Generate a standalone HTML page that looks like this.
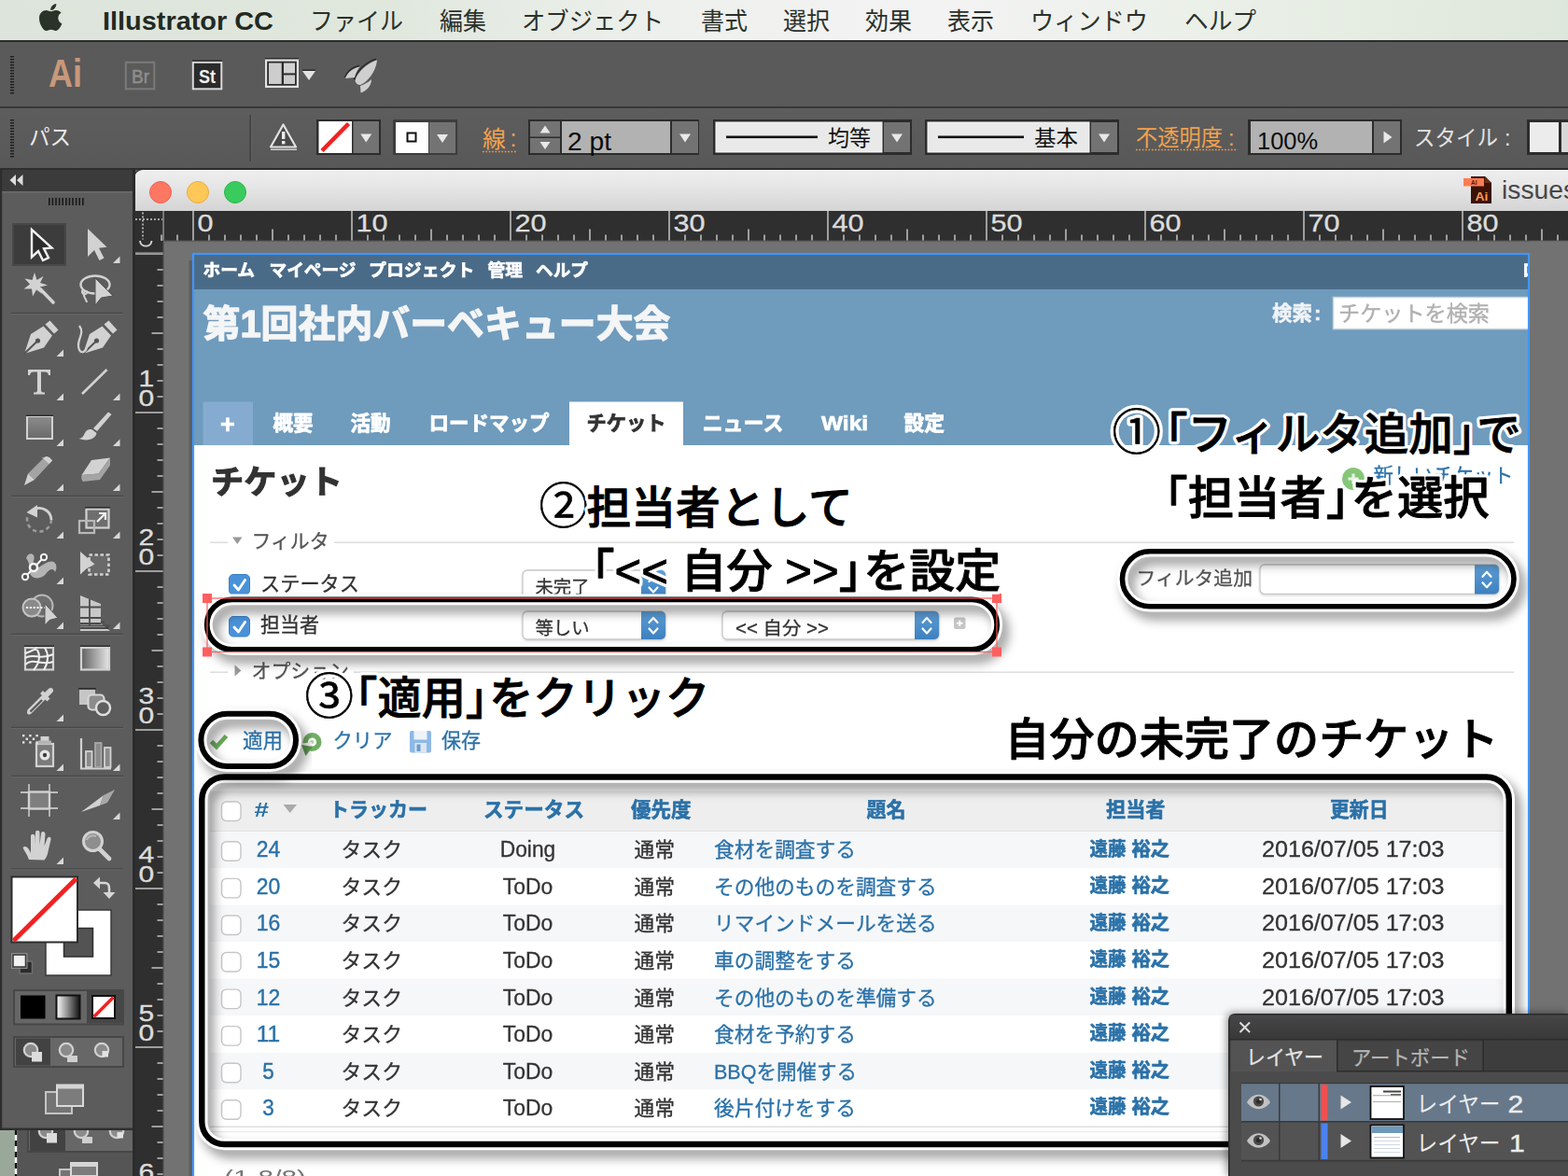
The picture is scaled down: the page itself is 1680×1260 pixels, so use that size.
<!DOCTYPE html>
<html lang="ja"><head><meta charset="utf-8"><title>Illustrator CC - issues</title><style>html,body{margin:0;padding:0;background:#5a5a5a}body{width:1680px;height:1260px;position:relative;overflow:hidden;font-family:"Liberation Sans", "Noto Sans CJK JP", sans-serif}body>div,body>div div{position:absolute;overflow:hidden}svg{display:block;position:absolute;left:0;top:0;overflow:hidden}text{font-family:"Liberation Sans", "Noto Sans CJK JP", sans-serif;white-space:pre}</style></head>
<body>
<div id="menubar" style="left:0px;top:0px;width:1680px;height:45px;background:linear-gradient(90deg,#dce4db 0,#e0e8de 25%,#eff1ee 45%,#f3f3f3 60%,#e9efe6 80%,#dee7db 100%);border-bottom:2px solid #2c2c2c;box-sizing:border-box;"><svg width="1680" height="45" viewBox="0 0 1680 45"><path transform="translate(41.74,1.93) scale(0.06473)" d="M318.7 268.7c-.2-36.7 16.4-64.4 50-84.8-18.8-26.9-47.2-41.7-84.7-44.6-35.5-2.8-74.3 20.7-88.5 20.7-15 0-49.4-19.7-76.4-19.7C63.3 141.2 4 184.8 4 273.5q0 39.3 14.4 81.2c12.8 36.7 59 126.7 107.2 125.2 25.2-.6 43-17.9 75.8-17.9 31.8 0 48.3 17.9 76.4 17.9 48.6-.7 90.4-82.5 102.6-119.3-65.2-30.7-61.7-90-61.7-91.9zm-56.6-164.2c27.3-32.4 24.8-61.9 24-72.5-24.1 1.4-52 16.4-67.9 34.9-17.5 19.8-27.8 44.3-25.6 71.9 26.1 2 49.9-11.4 69.5-34.3z" fill="#2a3328"/><text x="110" y="32" font-size="28.5" fill="#232a22" font-weight="bold" text-anchor="start" textLength="183" lengthAdjust="spacingAndGlyphs">Illustrator CC</text><text x="332" y="32" font-size="26" fill="#2b302a" textLength="100" lengthAdjust="spacingAndGlyphs">ファイル</text><text x="471" y="32" font-size="26" fill="#2b302a" textLength="50" lengthAdjust="spacingAndGlyphs">編集</text><text x="559" y="32" font-size="26" fill="#2b302a" textLength="152" lengthAdjust="spacingAndGlyphs">オブジェクト</text><text x="751" y="32" font-size="26" fill="#2b302a" textLength="50" lengthAdjust="spacingAndGlyphs">書式</text><text x="839" y="32" font-size="26" fill="#2b302a" textLength="50" lengthAdjust="spacingAndGlyphs">選択</text><text x="927" y="32" font-size="26" fill="#2b302a" textLength="50" lengthAdjust="spacingAndGlyphs">効果</text><text x="1015" y="32" font-size="26" fill="#2b302a" textLength="50" lengthAdjust="spacingAndGlyphs">表示</text><text x="1104" y="32" font-size="26" fill="#2b302a" textLength="126" lengthAdjust="spacingAndGlyphs">ウィンドウ</text><text x="1269" y="32" font-size="26" fill="#2b302a" textLength="77" lengthAdjust="spacingAndGlyphs">ヘルプ</text></svg></div>
<div id="appbar" style="left:0px;top:45px;width:1680px;height:70px;background:#5a5a5a;"><svg width="1680" height="70" viewBox="0 45 1680 70"><rect x="11" y="60" width="4" height="1.4" fill="#1e1e1e"/><rect x="11" y="63" width="4" height="1.4" fill="#1e1e1e"/><rect x="11" y="66" width="4" height="1.4" fill="#1e1e1e"/><rect x="11" y="69" width="4" height="1.4" fill="#1e1e1e"/><rect x="11" y="72" width="4" height="1.4" fill="#1e1e1e"/><rect x="11" y="75" width="4" height="1.4" fill="#1e1e1e"/><rect x="11" y="78" width="4" height="1.4" fill="#1e1e1e"/><rect x="11" y="81" width="4" height="1.4" fill="#1e1e1e"/><rect x="11" y="84" width="4" height="1.4" fill="#1e1e1e"/><rect x="11" y="87" width="4" height="1.4" fill="#1e1e1e"/><rect x="11" y="90" width="4" height="1.4" fill="#1e1e1e"/><rect x="11" y="93" width="4" height="1.4" fill="#1e1e1e"/><rect x="11" y="96" width="4" height="1.4" fill="#1e1e1e"/><rect x="11" y="99" width="4" height="1.4" fill="#1e1e1e"/><text x="52" y="93" font-size="43" fill="#c9987a" font-weight="bold" text-anchor="start" textLength="36" lengthAdjust="spacingAndGlyphs">Ai</text><rect x="134.8" y="66.8" width="30.5" height="28.5" fill="none" stroke="#7b7b7b" stroke-width="2"/><text x="141" y="89" font-size="20" fill="#8e8e8e" font-weight="normal" text-anchor="start" textLength="19" lengthAdjust="spacingAndGlyphs" stroke="#8e8e8e" stroke-width=".500">Br</text><rect x="206.8" y="66.8" width="30.5" height="28.5" fill="#2b2b2b" stroke="#dadada" stroke-width="2"/><rect x="206" y="64.3" width="32" height="1.5" fill="#2e2e2e"/><text x="213" y="89" font-size="20" fill="#f0f0f0" font-weight="bold" text-anchor="start" textLength="18" lengthAdjust="spacingAndGlyphs">St</text><rect x="284" y="62" width="36" height="1.6" fill="#2c2c2c"/><rect x="284" y="63.5" width="36" height="30.5" fill="#e2e2e2"/><rect x="286.2" y="65.7" width="31.6" height="26" fill="#2b2b2b"/><rect x="288" y="67.5" width="13.7" height="22.5" fill="#cdcdcd"/><rect x="304" y="67.5" width="12" height="10.9" fill="#d2d2d2"/><rect x="304" y="80.4" width="12" height="9.6" fill="#cbcbcb"/><rect x="324" y="74.5" width="14" height="1.5" fill="#2c2c2c"/><path d="M324 76h14l-7 10z" fill="#e2e2e2"/><path d="M403 63.200C393 65.800 381 77 379.500 85.500" fill="none" stroke="#2c2c2c" stroke-width="1.600"/><path d="M385 70.200C377.500 71.800 371.500 77 369.500 83" fill="none" stroke="#2c2c2c" stroke-width="1.600"/><g fill="#cfcfcf"><path d="M404 64.500C394 67 382 78 380.500 86.500c.5 2.500 2.500 4.500 5.500 4.500C394 88 403 76 404 64.500z"/><path d="M385.500 71.500C378 73 372 78 370 84l10-1c1-4 3-8 5.500-11.500z"/><path d="M398 85c0 7-5 12-11.500 14.500l-.5-7.500c4-1.500 9-4 12-7z"/></g></svg></div>
<div id="controlbar" style="left:0px;top:114px;width:1680px;height:68px;background:linear-gradient(#5d5d5d,#585858);"><svg width="1680" height="68" viewBox="0 114 1680 68"><rect x="11" y="128" width="4" height="1.4" fill="#1e1e1e"/><rect x="11" y="131" width="4" height="1.4" fill="#1e1e1e"/><rect x="11" y="134" width="4" height="1.4" fill="#1e1e1e"/><rect x="11" y="137" width="4" height="1.4" fill="#1e1e1e"/><rect x="11" y="140" width="4" height="1.4" fill="#1e1e1e"/><rect x="11" y="143" width="4" height="1.4" fill="#1e1e1e"/><rect x="11" y="146" width="4" height="1.4" fill="#1e1e1e"/><rect x="11" y="149" width="4" height="1.4" fill="#1e1e1e"/><rect x="11" y="152" width="4" height="1.4" fill="#1e1e1e"/><rect x="11" y="155" width="4" height="1.4" fill="#1e1e1e"/><rect x="11" y="158" width="4" height="1.4" fill="#1e1e1e"/><rect x="11" y="161" width="4" height="1.4" fill="#1e1e1e"/><rect x="11" y="164" width="4" height="1.4" fill="#1e1e1e"/><rect x="11" y="167" width="4" height="1.4" fill="#1e1e1e"/><text x="31" y="155" font-size="23" fill="#ececec" textLength="45" lengthAdjust="spacingAndGlyphs">パス</text><rect x="267.5" y="123" width="1.5" height="50" fill="#3f3f3f"/><rect x="269" y="123" width="1" height="50" fill="#626262"/><path d="M303.5 133.5L317 157.5H290z" fill="#4a4a4a" stroke="#e2e2e2" stroke-width="2.2" stroke-linejoin="round"/><rect x="302" y="141" width="3.4" height="8" fill="#ececec"/><rect x="302" y="151" width="3.4" height="3.4" fill="#ececec"/><rect x="290" y="159.5" width="28" height="1.5" fill="#cfcfcf"/><rect x="339" y="128" width="69" height="38" fill="#2c2c2c"/><rect x="341.5" y="130" width="35.5" height="34" fill="#fff"/><path d="M345 161.500L373.500 132.500" stroke="#f02222" stroke-width="4.600"/><rect x="378.5" y="130" width="27.5" height="34" fill="#737373"/><path d="M386.25 143.5h12l-6 9z" fill="#e8e8e8"/><rect x="421" y="128" width="69" height="38" fill="#3d3d3d"/><rect x="424" y="131" width="35" height="33" fill="#fff"/><rect x="436.5" y="142.5" width="9" height="9" fill="none" stroke="#111" stroke-width="2"/><rect x="460" y="131" width="28" height="33" fill="#737373"/><path d="M468 144h12l-6 9z" fill="#e8e8e8"/><text x="517" y="158" font-size="25" fill="#f3a24d" textLength="25" lengthAdjust="spacingAndGlyphs">線</text><text x="546.5" y="157" font-size="25" fill="#f3a24d">:</text><path d="M517 162.5H553" stroke="#f3a24d" stroke-width="1.6" stroke-dasharray="1.6 1.8"/><rect x="566" y="128" width="183" height="38" fill="#2c2c2c"/><rect x="568" y="130" width="32" height="16.5" fill="#737373"/><rect x="568" y="148" width="32" height="16" fill="#737373"/><path d="M578.5 142.5h11l-5.5 -8z" fill="#e8e8e8"/><path d="M578.5 152h11l-5.5 8z" fill="#e8e8e8"/><rect x="602" y="130" width="116" height="34" fill="#b2b2b2"/><text x="608" y="160.500" font-size="27" fill="#0a0a0a" textLength="47" lengthAdjust="spacingAndGlyphs">2 pt</text><rect x="720" y="130" width="28" height="34" fill="#737373"/><path d="M728 143.5h12l-6 9z" fill="#e8e8e8"/><rect x="764" y="128" width="213" height="38" fill="#2c2c2c"/><rect x="767" y="131" width="178" height="32" fill="#e9e9e9" stroke="#fafafa" stroke-width="1"/><rect x="778" y="145.5" width="98" height="2.6" fill="#111"/><text x="887" y="156" font-size="23" fill="#111" textLength="46" lengthAdjust="spacingAndGlyphs">均等</text><rect x="947" y="131" width="28" height="32" fill="#737373"/><path d="M955 143.5h12l-6 9z" fill="#e8e8e8"/><rect x="991" y="128" width="208" height="38" fill="#2c2c2c"/><rect x="994" y="131" width="173" height="32" fill="#e9e9e9" stroke="#fafafa" stroke-width="1"/><rect x="1005" y="145.5" width="92" height="2.6" fill="#111"/><text x="1108" y="156" font-size="23" fill="#111" textLength="47" lengthAdjust="spacingAndGlyphs">基本</text><rect x="1169" y="131" width="28" height="32" fill="#737373"/><path d="M1177 143.5h12l-6 9z" fill="#e8e8e8"/><text x="1217" y="156" font-size="23.500" fill="#f3a24d" textLength="93" lengthAdjust="spacingAndGlyphs">不透明度</text><text x="1316" y="156" font-size="23.500" fill="#f3a24d">:</text><path d="M1217 160.5H1326" stroke="#f3a24d" stroke-width="1.6" stroke-dasharray="1.6 1.8"/><rect x="1337" y="128" width="165" height="38" fill="#2c2c2c"/><rect x="1340" y="130" width="130" height="34" fill="#b2b2b2"/><text x="1347" y="160" font-size="26" fill="#0a0a0a" textLength="65" lengthAdjust="spacingAndGlyphs">100%</text><rect x="1472" y="130" width="28" height="34" fill="#737373"/><path d="M1482.5 140.5v13l9 -6.5z" fill="#e8e8e8"/><text x="1515" y="156" font-size="23.500" fill="#e4e4e4" textLength="90" lengthAdjust="spacingAndGlyphs">スタイル</text><text x="1612" y="156" font-size="23.500" fill="#e4e4e4">:</text><rect x="1636" y="128" width="44" height="38" fill="#2c2c2c"/><rect x="1639" y="131" width="31" height="32" fill="#ececec"/><rect x="1673" y="131" width="7" height="32" fill="#d8d8d8"/><rect x="0" y="114" width="1680" height="2" fill="#383838"/><rect x="0" y="180" width="1680" height="2" fill="#2e2e2e"/></svg></div>
<div id="titlebar" style="left:144px;top:182px;width:1536px;height:44px;background:linear-gradient(#efefef 0,#e6e6e6 40%,#d4d4d4 100%);border-radius:9px 0 0 0;box-shadow:0 0 0 1px #2a2a2a;"><svg width="1536" height="44" viewBox="144 182 1536 44"><circle cx="172" cy="206" r="11.500" fill="#fd7763" stroke="#f26050" stroke-width="1"/><circle cx="212" cy="206" r="11.500" fill="#fec858" stroke="#e9ab3c" stroke-width="1"/><circle cx="252" cy="206" r="11.500" fill="#39cb5e" stroke="#2eb34d" stroke-width="1"/><path d="M1576 189h15l7 7v22h-22z" fill="#3a1206"/><path d="M1591 189l7 7h-7z" fill="#6a2c14"/><rect x="1568" y="191" width="22" height="8.5" fill="#ff7c52"/><text x="1580.5" y="214.5" font-size="13" fill="#ff9a52" font-weight="bold" text-anchor="start" textLength="14" lengthAdjust="spacingAndGlyphs">Ai</text><text x="1576" y="198" font-size="6.5" fill="#5a1a08" font-weight="bold" text-anchor="start">AI</text><text x="1609" y="213" font-size="28" fill="#474747" font-weight="normal" text-anchor="start" textLength="80" lengthAdjust="spacingAndGlyphs">issues</text></svg></div>
<div id="document" style="left:145px;top:226px;width:1535px;height:1034px;background:#727272;"><svg width="1535" height="1034" viewBox="145 226 1535 1034"><rect x="145" y="226" width="1535" height="1034" fill="#727272"/><rect x="145" y="226" width="1535" height="32" fill="#2f2f2f"/><rect x="145" y="258" width="30" height="1002" fill="#2f2f2f"/><rect x="174.3" y="226" width="1.6" height="32" fill="#8a8a8a"/><path d="M145 235h29M153 227.500v29" stroke="#adadad" stroke-width="1.900" stroke-dasharray="1.900 2.100"/><path d="M150 258c.5 7.500 12 7.500 12.500 0" fill="none" stroke="#d6d6d6" stroke-width="1.900"/><path d="M207 226v32M377 226v32M547 226v32M717 226v32M887 226v32M1057 226v32M1227 226v32M1397 226v32M1567 226v32M292 245.500v12.500M462 245.500v12.500M632 245.500v12.500M802 245.500v12.500M972 245.500v12.500M1142 245.500v12.500M1312 245.500v12.500M1482 245.500v12.500M1652 245.500v12.500M173 251.500v6.500M190 251.500v6.500M224 251.500v6.500M241 251.500v6.500M258 251.500v6.500M275 251.500v6.500M309 251.500v6.500M326 251.500v6.500M343 251.500v6.500M360 251.500v6.500M394 251.500v6.500M411 251.500v6.500M428 251.500v6.500M445 251.500v6.500M479 251.500v6.500M496 251.500v6.500M513 251.500v6.500M530 251.500v6.500M564 251.500v6.500M581 251.500v6.500M598 251.500v6.500M615 251.500v6.500M649 251.500v6.500M666 251.500v6.500M683 251.500v6.500M700 251.500v6.500M734 251.500v6.500M751 251.500v6.500M768 251.500v6.500M785 251.500v6.500M819 251.500v6.500M836 251.500v6.500M853 251.500v6.500M870 251.500v6.500M904 251.500v6.500M921 251.500v6.500M938 251.500v6.500M955 251.500v6.500M989 251.500v6.500M1006 251.500v6.500M1023 251.500v6.500M1040 251.500v6.500M1074 251.500v6.500M1091 251.500v6.500M1108 251.500v6.500M1125 251.500v6.500M1159 251.500v6.500M1176 251.500v6.500M1193 251.500v6.500M1210 251.500v6.500M1244 251.500v6.500M1261 251.500v6.500M1278 251.500v6.500M1295 251.500v6.500M1329 251.500v6.500M1346 251.500v6.500M1363 251.500v6.500M1380 251.500v6.500M1414 251.500v6.500M1431 251.500v6.500M1448 251.500v6.500M1465 251.500v6.500M1499 251.500v6.500M1516 251.500v6.500M1533 251.500v6.500M1550 251.500v6.500M1584 251.500v6.500M1601 251.500v6.500M1618 251.500v6.500M1635 251.500v6.500M1669 251.500v6.500" stroke="#c4c4c4" stroke-width="1.500"/><text x="211.500" y="247.500" font-size="25.500" fill="#dcdcdc" stroke="#dcdcdc" stroke-width=".35" textLength="17" lengthAdjust="spacingAndGlyphs">0</text><text x="381.500" y="247.500" font-size="25.500" fill="#dcdcdc" stroke="#dcdcdc" stroke-width=".35" textLength="34" lengthAdjust="spacingAndGlyphs">10</text><text x="551.500" y="247.500" font-size="25.500" fill="#dcdcdc" stroke="#dcdcdc" stroke-width=".35" textLength="34" lengthAdjust="spacingAndGlyphs">20</text><text x="721.500" y="247.500" font-size="25.500" fill="#dcdcdc" stroke="#dcdcdc" stroke-width=".35" textLength="34" lengthAdjust="spacingAndGlyphs">30</text><text x="891.500" y="247.500" font-size="25.500" fill="#dcdcdc" stroke="#dcdcdc" stroke-width=".35" textLength="34" lengthAdjust="spacingAndGlyphs">40</text><text x="1061.500" y="247.500" font-size="25.500" fill="#dcdcdc" stroke="#dcdcdc" stroke-width=".35" textLength="34" lengthAdjust="spacingAndGlyphs">50</text><text x="1231.500" y="247.500" font-size="25.500" fill="#dcdcdc" stroke="#dcdcdc" stroke-width=".35" textLength="34" lengthAdjust="spacingAndGlyphs">60</text><text x="1401.500" y="247.500" font-size="25.500" fill="#dcdcdc" stroke="#dcdcdc" stroke-width=".35" textLength="34" lengthAdjust="spacingAndGlyphs">70</text><text x="1571.500" y="247.500" font-size="25.500" fill="#dcdcdc" stroke="#dcdcdc" stroke-width=".35" textLength="34" lengthAdjust="spacingAndGlyphs">80</text><path d="M145 272h30M168.500 289h6.500M168.500 306h6.500M168.500 323h6.500M168.500 340h6.500M162.500 357h12.500M168.500 374h6.500M168.500 391h6.500M168.500 408h6.500M168.500 425h6.500M145 442h30M168.500 459h6.500M168.500 476h6.500M168.500 493h6.500M168.500 510h6.500M162.500 527h12.500M168.500 544h6.500M168.500 561h6.500M168.500 578h6.500M168.500 595h6.500M145 612h30M168.500 629h6.500M168.500 646h6.500M168.500 663h6.500M168.500 680h6.500M162.500 697h12.500M168.500 714h6.500M168.500 731h6.500M168.500 748h6.500M168.500 765h6.500M145 782h30M168.500 799h6.500M168.500 816h6.500M168.500 833h6.500M168.500 850h6.500M162.500 867h12.500M168.500 884h6.500M168.500 901h6.500M168.500 918h6.500M168.500 935h6.500M145 952h30M168.500 969h6.500M168.500 986h6.500M168.500 1003h6.500M168.500 1020h6.500M162.500 1037h12.500M168.500 1054h6.500M168.500 1071h6.500M168.500 1088h6.500M168.500 1105h6.500M145 1122h30M168.500 1139h6.500M168.500 1156h6.500M168.500 1173h6.500M168.500 1190h6.500M162.500 1207h12.500M168.500 1224h6.500M168.500 1241h6.500M168.500 1258h6.500" stroke="#c4c4c4" stroke-width="1.500"/><path d="M145 271h30" stroke="#8a8a8a" stroke-width="1.500"/><text x="148.500" y="414" font-size="24" fill="#dcdcdc" stroke="#dcdcdc" stroke-width=".35" textLength="16.7" lengthAdjust="spacingAndGlyphs">1</text><text x="148.500" y="434.500" font-size="24" fill="#dcdcdc" stroke="#dcdcdc" stroke-width=".35" textLength="16.7" lengthAdjust="spacingAndGlyphs">0</text><text x="148.500" y="584" font-size="24" fill="#dcdcdc" stroke="#dcdcdc" stroke-width=".35" textLength="16.7" lengthAdjust="spacingAndGlyphs">2</text><text x="148.500" y="604.500" font-size="24" fill="#dcdcdc" stroke="#dcdcdc" stroke-width=".35" textLength="16.7" lengthAdjust="spacingAndGlyphs">0</text><text x="148.500" y="754" font-size="24" fill="#dcdcdc" stroke="#dcdcdc" stroke-width=".35" textLength="16.7" lengthAdjust="spacingAndGlyphs">3</text><text x="148.500" y="774.500" font-size="24" fill="#dcdcdc" stroke="#dcdcdc" stroke-width=".35" textLength="16.7" lengthAdjust="spacingAndGlyphs">0</text><text x="148.500" y="924" font-size="24" fill="#dcdcdc" stroke="#dcdcdc" stroke-width=".35" textLength="16.7" lengthAdjust="spacingAndGlyphs">4</text><text x="148.500" y="944.500" font-size="24" fill="#dcdcdc" stroke="#dcdcdc" stroke-width=".35" textLength="16.7" lengthAdjust="spacingAndGlyphs">0</text><text x="148.500" y="1094" font-size="24" fill="#dcdcdc" stroke="#dcdcdc" stroke-width=".35" textLength="16.7" lengthAdjust="spacingAndGlyphs">5</text><text x="148.500" y="1114.500" font-size="24" fill="#dcdcdc" stroke="#dcdcdc" stroke-width=".35" textLength="16.7" lengthAdjust="spacingAndGlyphs">0</text><text x="148.500" y="1264" font-size="24" fill="#dcdcdc" stroke="#dcdcdc" stroke-width=".35" textLength="16.7" lengthAdjust="spacingAndGlyphs">6</text><text x="148.500" y="1284.500" font-size="24" fill="#dcdcdc" stroke="#dcdcdc" stroke-width=".35" textLength="16.7" lengthAdjust="spacingAndGlyphs">0</text><rect x="174.5" y="258" width="1.2" height="1002" fill="#555"/><rect x="175" y="257.5" width="1505" height="1.2" fill="#555"/><rect x="202.5" y="279" width="3.5" height="981" fill="#5e5e5e"/><g id="artboard"><defs><linearGradient id="selblue" x1="0" y1="0" x2="0" y2="1"><stop offset="0" stop-color="#5e9fd8"/><stop offset="1" stop-color="#3d80bf"/></linearGradient><filter id="sel" x="-5%" y="-20%" width="110%" height="150%"><feDropShadow dx="0" dy="1" stdDeviation=".8" flood-color="#000" flood-opacity=".18"/></filter><filter id="soft" x="-5%" y="-5%" width="110%" height="110%"><feGaussianBlur stdDeviation=".55"/></filter></defs><rect x="207" y="272" width="1431" height="988" fill="#fff"/><rect x="207" y="272" width="1431" height="38" fill="#4a6b88"/><rect x="207" y="310" width="1431" height="167" fill="#6f9bbd"/><rect x="1428.5" y="318.5" width="215" height="34" fill="#fff" stroke="#c9d3dc" stroke-width="1.500"/><rect x="217.5" y="430.5" width="53.5" height="46.5" fill="#86abd0"/><rect x="610" y="430.5" width="122" height="47" fill="#fff"/><rect x="225" y="580.5" width="1397" height="1.5" fill="#dcdcdc"/><rect x="244" y="570" width="114" height="22" fill="#fff"/><path d="M249 575.500h10.500l-5.250 7.500z" fill="#9a9a9a"/><rect x="245.5" y="615.5" width="22" height="21.5" fill="#4a92d8" rx="4.500" stroke="#3b80c6" stroke-width="1"/><path d="M251 627l4.500 5 7-10.500" fill="none" stroke="#fff" stroke-width="2.800" stroke-linecap="round" stroke-linejoin="round"/><rect x="560" y="611" width="153" height="30" fill="#fff" rx="5" stroke="#c8c8c8" stroke-width="1.300" filter="url(#sel)"/><path d="M687 611h21a5 5 0 0 1 5 5v20a5 5 0 0 1-5 5h-21z" fill="url(#selblue)"/><path d="M695.5 623l4.500-5 4.500 5M695.5 629.5l4.500 5 4.500-5" fill="none" stroke="#fff" stroke-width="2.200" stroke-linecap="round" stroke-linejoin="round"/><rect x="245.5" y="660.5" width="22" height="21.5" fill="#4a92d8" rx="4.500" stroke="#3b80c6" stroke-width="1"/><path d="M251 672l4.500 5 7-10.500" fill="none" stroke="#fff" stroke-width="2.800" stroke-linecap="round" stroke-linejoin="round"/><rect x="560" y="655" width="153" height="30" fill="#fff" rx="5" stroke="#c8c8c8" stroke-width="1.300" filter="url(#sel)"/><path d="M687 655h21a5 5 0 0 1 5 5v20a5 5 0 0 1-5 5h-21z" fill="url(#selblue)"/><path d="M695.5 667l4.500-5 4.500 5M695.5 673.5l4.500 5 4.500-5" fill="none" stroke="#fff" stroke-width="2.200" stroke-linecap="round" stroke-linejoin="round"/><rect x="774" y="655" width="232" height="30" fill="#fff" rx="5" stroke="#c8c8c8" stroke-width="1.300" filter="url(#sel)"/><path d="M980 655h21a5 5 0 0 1 5 5v20a5 5 0 0 1-5 5h-21z" fill="url(#selblue)"/><path d="M988.5 667l4.500-5 4.500 5M988.5 673.5l4.500 5 4.500-5" fill="none" stroke="#fff" stroke-width="2.200" stroke-linecap="round" stroke-linejoin="round"/><rect x="1022" y="661.5" width="12.5" height="12.5" fill="#c6c6c6" rx="2"/><path d="M1025 667.750h6.500M1028.250 664.500v6.500" stroke="#fff" stroke-width="1.800"/><rect x="1350" y="605" width="256" height="31.5" fill="#fff" rx="5" stroke="#c8c8c8" stroke-width="1.300" filter="url(#sel)"/><path d="M1580 605h21a5 5 0 0 1 5 5v21.5a5 5 0 0 1-5 5h-21z" fill="url(#selblue)"/><path d="M1588.5 617.75l4.500-5 4.500 5M1588.5 624.25l4.500 5 4.500-5" fill="none" stroke="#fff" stroke-width="2.200" stroke-linecap="round" stroke-linejoin="round"/><rect x="225" y="719.5" width="1397" height="1.5" fill="#dcdcdc"/><rect x="244" y="708" width="135" height="22" fill="#fff"/><path d="M251.500 712.500v12l7-6z" fill="#9a9a9a"/><rect x="225" y="847.5" width="1387" height="43" fill="#eeeeee"/><rect x="225" y="890.5" width="1387" height="39.57" fill="#f6f7f8"/><rect x="225" y="930.07" width="1387" height="39.57" fill="#fff"/><rect x="225" y="969.64" width="1387" height="39.57" fill="#f6f7f8"/><rect x="225" y="1009.21" width="1387" height="39.57" fill="#fff"/><rect x="225" y="1048.78" width="1387" height="39.57" fill="#f6f7f8"/><rect x="225" y="1088.35" width="1387" height="39.57" fill="#fff"/><rect x="225" y="1127.92" width="1387" height="39.57" fill="#f6f7f8"/><rect x="225" y="1167.49" width="1387" height="39.57" fill="#fff"/><rect x="225" y="890" width="1387" height="1" fill="#e2e2e2"/><rect x="225" y="1206.5" width="1387" height="1.5" fill="#dddddd"/><rect x="225" y="1212" width="1387" height="1.2" fill="#e8e8e8"/><rect x="237.5" y="859" width="20.5" height="20.5" fill="#fff" rx="5" stroke="#c6c6c6" stroke-width="1.400"/><rect x="237.5" y="901.8" width="20.5" height="20.5" fill="#fff" rx="5" stroke="#c6c6c6" stroke-width="1.400"/><rect x="237.5" y="941.37" width="20.5" height="20.5" fill="#fff" rx="5" stroke="#c6c6c6" stroke-width="1.400"/><rect x="237.5" y="980.94" width="20.5" height="20.5" fill="#fff" rx="5" stroke="#c6c6c6" stroke-width="1.400"/><rect x="237.5" y="1020.51" width="20.5" height="20.5" fill="#fff" rx="5" stroke="#c6c6c6" stroke-width="1.400"/><rect x="237.5" y="1060.08" width="20.5" height="20.5" fill="#fff" rx="5" stroke="#c6c6c6" stroke-width="1.400"/><rect x="237.5" y="1099.65" width="20.5" height="20.5" fill="#fff" rx="5" stroke="#c6c6c6" stroke-width="1.400"/><rect x="237.5" y="1139.22" width="20.5" height="20.5" fill="#fff" rx="5" stroke="#c6c6c6" stroke-width="1.400"/><rect x="237.5" y="1178.79" width="20.5" height="20.5" fill="#fff" rx="5" stroke="#c6c6c6" stroke-width="1.400"/><g filter="url(#soft)"><text x="217.500" y="295.500" font-size="18.500" font-weight="bold" fill="#fff" stroke="#fff" stroke-width=".7" stroke-linejoin="round" textLength="55.5" lengthAdjust="spacingAndGlyphs">ホーム</text><text x="288.500" y="295.500" font-size="18.500" font-weight="bold" fill="#fff" stroke="#fff" stroke-width=".7" stroke-linejoin="round" textLength="93" lengthAdjust="spacingAndGlyphs">マイページ</text><text x="395" y="295.500" font-size="18.500" font-weight="bold" fill="#fff" stroke="#fff" stroke-width=".7" stroke-linejoin="round" textLength="113.5" lengthAdjust="spacingAndGlyphs">プロジェクト</text><text x="522.500" y="295.500" font-size="18.500" font-weight="bold" fill="#fff" stroke="#fff" stroke-width=".7" stroke-linejoin="round" textLength="37.5" lengthAdjust="spacingAndGlyphs">管理</text><text x="574" y="295.500" font-size="18.500" font-weight="bold" fill="#fff" stroke="#fff" stroke-width=".7" stroke-linejoin="round" textLength="56" lengthAdjust="spacingAndGlyphs">ヘルプ</text><text x="1631" y="295.500" font-size="18.500" font-weight="bold" fill="#fff" stroke="#fff" stroke-width=".7" stroke-linejoin="round">ロ</text><text x="217.500" y="361" font-size="40" font-weight="bold" fill="#f4f5f6" stroke="#f4f5f6" stroke-width="1.3" stroke-linejoin="round" textLength="501" lengthAdjust="spacingAndGlyphs">第1回社内バーベキュー大会</text><text x="1363" y="342.500" font-size="22" font-weight="bold" fill="#f0f3f6" stroke="#f0f3f6" stroke-width=".5" stroke-linejoin="round" textLength="43" lengthAdjust="spacingAndGlyphs">検索</text><text x="1408" y="342.500" font-size="22" font-weight="bold" fill="#f0f3f6" stroke="#f0f3f6" stroke-width=".5">:</text><text x="1434" y="344" font-size="23" fill="#b0b0b0" stroke="#b0b0b0" stroke-width=".4" stroke-linejoin="round" textLength="162" lengthAdjust="spacingAndGlyphs">チケットを検索</text><text x="236" y="464" font-size="27" fill="#fff" font-weight="bold" text-anchor="start" stroke="#fff" stroke-width=".600">+</text><text x="292.500" y="461" font-size="21.500" font-weight="bold" fill="#fff" stroke="#fff" stroke-width=".8" stroke-linejoin="round" textLength="43" lengthAdjust="spacingAndGlyphs">概要</text><text x="375.500" y="461" font-size="21.500" font-weight="bold" fill="#fff" stroke="#fff" stroke-width=".8" stroke-linejoin="round" textLength="43" lengthAdjust="spacingAndGlyphs">活動</text><text x="459.500" y="461" font-size="21.500" font-weight="bold" fill="#fff" stroke="#fff" stroke-width=".8" stroke-linejoin="round" textLength="129" lengthAdjust="spacingAndGlyphs">ロードマップ</text><text x="628.500" y="461" font-size="21.500" font-weight="bold" fill="#333" stroke="#333" stroke-width=".8" stroke-linejoin="round" textLength="85" lengthAdjust="spacingAndGlyphs">チケット</text><text x="752.500" y="461" font-size="21.500" font-weight="bold" fill="#fff" stroke="#fff" stroke-width=".8" stroke-linejoin="round" textLength="87" lengthAdjust="spacingAndGlyphs">ニュース</text><text x="968.500" y="461" font-size="21.500" font-weight="bold" fill="#fff" stroke="#fff" stroke-width=".8" stroke-linejoin="round" textLength="43.5" lengthAdjust="spacingAndGlyphs">設定</text><text x="880" y="461" font-size="22" fill="#fff" font-weight="bold" text-anchor="start" textLength="50" lengthAdjust="spacingAndGlyphs" stroke="#fff" stroke-width=".700">Wiki</text><text x="226" y="529" font-size="35" font-weight="bold" fill="#333" stroke="#333" stroke-width="1.1" stroke-linejoin="round" textLength="141" lengthAdjust="spacingAndGlyphs">チケット</text><circle cx="1450" cy="513" r="12" fill="#86c678"/><path d="M1444.500 513h11M1450 507.500v11" stroke="#e8f5e4" stroke-width="3.200"/><text x="1471.500" y="517" font-size="21.500" fill="#2a71a8" stroke="#2a71a8" stroke-width=".3" textLength="150" lengthAdjust="spacingAndGlyphs">新しいチケット</text><text x="269.500" y="587" font-size="21" fill="#555" stroke="#555" stroke-width=".3" textLength="83" lengthAdjust="spacingAndGlyphs">フィルタ</text><text x="279" y="632.500" font-size="21.200" fill="#333" stroke="#333" stroke-width=".3" textLength="106" lengthAdjust="spacingAndGlyphs">ステータス</text><text x="573.500" y="636" font-size="19.500" fill="#333" stroke="#333" stroke-width=".3" textLength="58" lengthAdjust="spacingAndGlyphs">未完了</text><text x="279" y="677" font-size="21.200" fill="#333" stroke="#333" stroke-width=".3" textLength="63" lengthAdjust="spacingAndGlyphs">担当者</text><text x="573.500" y="680" font-size="19.500" fill="#333" stroke="#333" stroke-width=".3" textLength="58" lengthAdjust="spacingAndGlyphs">等しい</text><text x="788" y="680" font-size="19.500" fill="#333" stroke="#333" stroke-width=".3" textLength="100" lengthAdjust="spacingAndGlyphs">&lt;&lt; 自分 &gt;&gt;</text><text x="1217.500" y="627" font-size="20.700" fill="#555" stroke="#555" stroke-width=".3" textLength="124.5" lengthAdjust="spacingAndGlyphs">フィルタ追加</text><text x="269.500" y="726" font-size="21" fill="#555" stroke="#555" stroke-width=".3" textLength="104.5" lengthAdjust="spacingAndGlyphs">オプション</text><path d="M226.500 794.500l5.500 5.500 10.500-11.500" fill="none" stroke="#69a95d" stroke-width="4.800" stroke-linejoin="miter"/><text x="260" y="801" font-size="21.500" fill="#2a71a8" stroke="#2a71a8" stroke-width=".3" textLength="43" lengthAdjust="spacingAndGlyphs">適用</text><circle cx="334.500" cy="795" r="7.300" fill="none" stroke="#6fae62" stroke-width="5.400"/><circle cx="334.500" cy="795" r="2" fill="#a9d3a0"/><path d="M334.500 795L321 797l4 13 6-2z" fill="#fff"/><path d="M323 798l12 2-7.500 10z" fill="#5f9e53"/><text x="356.500" y="801" font-size="21.500" fill="#2a71a8" stroke="#2a71a8" stroke-width=".3" textLength="64" lengthAdjust="spacingAndGlyphs">クリア</text><rect x="439" y="783" width="23" height="23.5" fill="#8db9e6" rx="2"/><rect x="443.5" y="783" width="14" height="9.5" fill="#eef3f8"/><rect x="444.5" y="796" width="12.5" height="10.5" fill="#dde6ef"/><rect x="446.5" y="797.5" width="4" height="7.5" fill="#6b9bd1"/><text x="473" y="801" font-size="21.500" fill="#2a71a8" stroke="#2a71a8" stroke-width=".3" textLength="42" lengthAdjust="spacingAndGlyphs">保存</text><text x="272.5" y="874.5" font-size="22" fill="#2a71a8" font-weight="bold" text-anchor="start" textLength="15.5" lengthAdjust="spacingAndGlyphs">#</text><path d="M303.500 862h14.500l-7.250 9z" fill="#a9a9a9"/><text x="353" y="874.500" font-size="21.300" font-weight="bold" fill="#2a71a8" stroke="#2a71a8" stroke-width=".6" stroke-linejoin="round" textLength="105" lengthAdjust="spacingAndGlyphs">トラッカー</text><text x="518" y="874.500" font-size="21.300" font-weight="bold" fill="#2a71a8" stroke="#2a71a8" stroke-width=".6" stroke-linejoin="round" textLength="108" lengthAdjust="spacingAndGlyphs">ステータス</text><text x="676" y="874.500" font-size="21.300" font-weight="bold" fill="#2a71a8" stroke="#2a71a8" stroke-width=".6" stroke-linejoin="round" textLength="64.5" lengthAdjust="spacingAndGlyphs">優先度</text><text x="928.500" y="874.500" font-size="21.300" font-weight="bold" fill="#2a71a8" stroke="#2a71a8" stroke-width=".6" stroke-linejoin="round" textLength="42" lengthAdjust="spacingAndGlyphs">題名</text><text x="1185" y="874.500" font-size="21.300" font-weight="bold" fill="#2a71a8" stroke="#2a71a8" stroke-width=".6" stroke-linejoin="round" textLength="63.5" lengthAdjust="spacingAndGlyphs">担当者</text><text x="1425" y="874.500" font-size="21.300" font-weight="bold" fill="#2a71a8" stroke="#2a71a8" stroke-width=".6" stroke-linejoin="round" textLength="62.5" lengthAdjust="spacingAndGlyphs">更新日</text><text x="287.5" y="918.3" font-size="23" fill="#2a71a8" font-weight="normal" text-anchor="middle" textLength="25.5" lengthAdjust="spacingAndGlyphs" stroke="#2a71a8" stroke-width=".400">24</text><text x="365.500" y="918.300" font-size="21.800" fill="#333" stroke="#333" stroke-width=".3" textLength="65.5" lengthAdjust="spacingAndGlyphs">タスク</text><text x="565.5" y="918.3" font-size="23" fill="#333" font-weight="normal" text-anchor="middle" textLength="59.5" lengthAdjust="spacingAndGlyphs" stroke="#333" stroke-width=".300">Doing</text><text x="679.500" y="918.300" font-size="21.700" fill="#333" stroke="#333" stroke-width=".3" textLength="43.5" lengthAdjust="spacingAndGlyphs">通常</text><text x="765" y="918.300" font-size="21.700" fill="#2a71a8" stroke="#2a71a8" stroke-width=".3" textLength="152" lengthAdjust="spacingAndGlyphs">食材を調査する</text><text x="1167.500" y="916.500" font-size="20.500" font-weight="bold" fill="#2a71a8" stroke="#2a71a8" stroke-width=".6" stroke-linejoin="round" textLength="39" lengthAdjust="spacingAndGlyphs">遠藤</text><text x="1212.500" y="916.500" font-size="20.500" font-weight="bold" fill="#2a71a8" stroke="#2a71a8" stroke-width=".6" stroke-linejoin="round" textLength="40.5" lengthAdjust="spacingAndGlyphs">裕之</text><text x="1352" y="918.3" font-size="23" fill="#333" font-weight="normal" text-anchor="start" textLength="195.5" lengthAdjust="spacingAndGlyphs" stroke="#333" stroke-width=".300">2016/07/05 17:03</text><text x="287.5" y="957.87" font-size="23" fill="#2a71a8" font-weight="normal" text-anchor="middle" textLength="25.5" lengthAdjust="spacingAndGlyphs" stroke="#2a71a8" stroke-width=".400">20</text><text x="365.500" y="957.870" font-size="21.800" fill="#333" stroke="#333" stroke-width=".3" textLength="65.5" lengthAdjust="spacingAndGlyphs">タスク</text><text x="565.5" y="957.87" font-size="23" fill="#333" font-weight="normal" text-anchor="middle" textLength="53.5" lengthAdjust="spacingAndGlyphs" stroke="#333" stroke-width=".300">ToDo</text><text x="679.500" y="957.870" font-size="21.700" fill="#333" stroke="#333" stroke-width=".3" textLength="43.5" lengthAdjust="spacingAndGlyphs">通常</text><text x="765" y="957.870" font-size="21.700" fill="#2a71a8" stroke="#2a71a8" stroke-width=".3" textLength="238.7" lengthAdjust="spacingAndGlyphs">その他のものを調査する</text><text x="1167.500" y="956.070" font-size="20.500" font-weight="bold" fill="#2a71a8" stroke="#2a71a8" stroke-width=".6" stroke-linejoin="round" textLength="39" lengthAdjust="spacingAndGlyphs">遠藤</text><text x="1212.500" y="956.070" font-size="20.500" font-weight="bold" fill="#2a71a8" stroke="#2a71a8" stroke-width=".6" stroke-linejoin="round" textLength="40.5" lengthAdjust="spacingAndGlyphs">裕之</text><text x="1352" y="957.87" font-size="23" fill="#333" font-weight="normal" text-anchor="start" textLength="195.5" lengthAdjust="spacingAndGlyphs" stroke="#333" stroke-width=".300">2016/07/05 17:03</text><text x="287.5" y="997.44" font-size="23" fill="#2a71a8" font-weight="normal" text-anchor="middle" textLength="25.5" lengthAdjust="spacingAndGlyphs" stroke="#2a71a8" stroke-width=".400">16</text><text x="365.500" y="997.440" font-size="21.800" fill="#333" stroke="#333" stroke-width=".3" textLength="65.5" lengthAdjust="spacingAndGlyphs">タスク</text><text x="565.5" y="997.44" font-size="23" fill="#333" font-weight="normal" text-anchor="middle" textLength="53.5" lengthAdjust="spacingAndGlyphs" stroke="#333" stroke-width=".300">ToDo</text><text x="679.500" y="997.440" font-size="21.700" fill="#333" stroke="#333" stroke-width=".3" textLength="43.5" lengthAdjust="spacingAndGlyphs">通常</text><text x="765" y="997.440" font-size="21.700" fill="#2a71a8" stroke="#2a71a8" stroke-width=".3" textLength="238.7" lengthAdjust="spacingAndGlyphs">リマインドメールを送る</text><text x="1167.500" y="995.640" font-size="20.500" font-weight="bold" fill="#2a71a8" stroke="#2a71a8" stroke-width=".6" stroke-linejoin="round" textLength="39" lengthAdjust="spacingAndGlyphs">遠藤</text><text x="1212.500" y="995.640" font-size="20.500" font-weight="bold" fill="#2a71a8" stroke="#2a71a8" stroke-width=".6" stroke-linejoin="round" textLength="40.5" lengthAdjust="spacingAndGlyphs">裕之</text><text x="1352" y="997.44" font-size="23" fill="#333" font-weight="normal" text-anchor="start" textLength="195.5" lengthAdjust="spacingAndGlyphs" stroke="#333" stroke-width=".300">2016/07/05 17:03</text><text x="287.5" y="1037.01" font-size="23" fill="#2a71a8" font-weight="normal" text-anchor="middle" textLength="25.5" lengthAdjust="spacingAndGlyphs" stroke="#2a71a8" stroke-width=".400">15</text><text x="365.500" y="1037.010" font-size="21.800" fill="#333" stroke="#333" stroke-width=".3" textLength="65.5" lengthAdjust="spacingAndGlyphs">タスク</text><text x="565.5" y="1037.01" font-size="23" fill="#333" font-weight="normal" text-anchor="middle" textLength="53.5" lengthAdjust="spacingAndGlyphs" stroke="#333" stroke-width=".300">ToDo</text><text x="679.500" y="1037.010" font-size="21.700" fill="#333" stroke="#333" stroke-width=".3" textLength="43.5" lengthAdjust="spacingAndGlyphs">通常</text><text x="765" y="1037.010" font-size="21.700" fill="#2a71a8" stroke="#2a71a8" stroke-width=".3" textLength="152" lengthAdjust="spacingAndGlyphs">車の調整をする</text><text x="1167.500" y="1035.210" font-size="20.500" font-weight="bold" fill="#2a71a8" stroke="#2a71a8" stroke-width=".6" stroke-linejoin="round" textLength="39" lengthAdjust="spacingAndGlyphs">遠藤</text><text x="1212.500" y="1035.210" font-size="20.500" font-weight="bold" fill="#2a71a8" stroke="#2a71a8" stroke-width=".6" stroke-linejoin="round" textLength="40.5" lengthAdjust="spacingAndGlyphs">裕之</text><text x="1352" y="1037.01" font-size="23" fill="#333" font-weight="normal" text-anchor="start" textLength="195.5" lengthAdjust="spacingAndGlyphs" stroke="#333" stroke-width=".300">2016/07/05 17:03</text><text x="287.5" y="1076.58" font-size="23" fill="#2a71a8" font-weight="normal" text-anchor="middle" textLength="25.5" lengthAdjust="spacingAndGlyphs" stroke="#2a71a8" stroke-width=".400">12</text><text x="365.500" y="1076.580" font-size="21.800" fill="#333" stroke="#333" stroke-width=".3" textLength="65.5" lengthAdjust="spacingAndGlyphs">タスク</text><text x="565.5" y="1076.58" font-size="23" fill="#333" font-weight="normal" text-anchor="middle" textLength="53.5" lengthAdjust="spacingAndGlyphs" stroke="#333" stroke-width=".300">ToDo</text><text x="679.500" y="1076.580" font-size="21.700" fill="#333" stroke="#333" stroke-width=".3" textLength="43.5" lengthAdjust="spacingAndGlyphs">通常</text><text x="765" y="1076.580" font-size="21.700" fill="#2a71a8" stroke="#2a71a8" stroke-width=".3" textLength="238.7" lengthAdjust="spacingAndGlyphs">その他のものを準備する</text><text x="1167.500" y="1074.780" font-size="20.500" font-weight="bold" fill="#2a71a8" stroke="#2a71a8" stroke-width=".6" stroke-linejoin="round" textLength="39" lengthAdjust="spacingAndGlyphs">遠藤</text><text x="1212.500" y="1074.780" font-size="20.500" font-weight="bold" fill="#2a71a8" stroke="#2a71a8" stroke-width=".6" stroke-linejoin="round" textLength="40.5" lengthAdjust="spacingAndGlyphs">裕之</text><text x="1352" y="1076.58" font-size="23" fill="#333" font-weight="normal" text-anchor="start" textLength="195.5" lengthAdjust="spacingAndGlyphs" stroke="#333" stroke-width=".300">2016/07/05 17:03</text><text x="287.5" y="1116.15" font-size="23" fill="#2a71a8" font-weight="normal" text-anchor="middle" textLength="25.5" lengthAdjust="spacingAndGlyphs" stroke="#2a71a8" stroke-width=".400">11</text><text x="365.500" y="1116.150" font-size="21.800" fill="#333" stroke="#333" stroke-width=".3" textLength="65.5" lengthAdjust="spacingAndGlyphs">タスク</text><text x="565.5" y="1116.15" font-size="23" fill="#333" font-weight="normal" text-anchor="middle" textLength="53.5" lengthAdjust="spacingAndGlyphs" stroke="#333" stroke-width=".300">ToDo</text><text x="679.500" y="1116.150" font-size="21.700" fill="#333" stroke="#333" stroke-width=".3" textLength="43.5" lengthAdjust="spacingAndGlyphs">通常</text><text x="765" y="1116.150" font-size="21.700" fill="#2a71a8" stroke="#2a71a8" stroke-width=".3" textLength="152" lengthAdjust="spacingAndGlyphs">食材を予約する</text><text x="1167.500" y="1114.350" font-size="20.500" font-weight="bold" fill="#2a71a8" stroke="#2a71a8" stroke-width=".6" stroke-linejoin="round" textLength="39" lengthAdjust="spacingAndGlyphs">遠藤</text><text x="1212.500" y="1114.350" font-size="20.500" font-weight="bold" fill="#2a71a8" stroke="#2a71a8" stroke-width=".6" stroke-linejoin="round" textLength="40.5" lengthAdjust="spacingAndGlyphs">裕之</text><text x="287.5" y="1155.72" font-size="23" fill="#2a71a8" font-weight="normal" text-anchor="middle" textLength="12.5" lengthAdjust="spacingAndGlyphs" stroke="#2a71a8" stroke-width=".400">5</text><text x="365.500" y="1155.720" font-size="21.800" fill="#333" stroke="#333" stroke-width=".3" textLength="65.5" lengthAdjust="spacingAndGlyphs">タスク</text><text x="565.5" y="1155.72" font-size="23" fill="#333" font-weight="normal" text-anchor="middle" textLength="53.5" lengthAdjust="spacingAndGlyphs" stroke="#333" stroke-width=".300">ToDo</text><text x="679.500" y="1155.720" font-size="21.700" fill="#333" stroke="#333" stroke-width=".3" textLength="43.5" lengthAdjust="spacingAndGlyphs">通常</text><text x="765" y="1155.720" font-size="21.700" fill="#2a71a8" stroke="#2a71a8" stroke-width=".3" textLength="153" lengthAdjust="spacingAndGlyphs">BBQを開催する</text><text x="1167.500" y="1153.920" font-size="20.500" font-weight="bold" fill="#2a71a8" stroke="#2a71a8" stroke-width=".6" stroke-linejoin="round" textLength="39" lengthAdjust="spacingAndGlyphs">遠藤</text><text x="1212.500" y="1153.920" font-size="20.500" font-weight="bold" fill="#2a71a8" stroke="#2a71a8" stroke-width=".6" stroke-linejoin="round" textLength="40.5" lengthAdjust="spacingAndGlyphs">裕之</text><text x="287.5" y="1195.29" font-size="23" fill="#2a71a8" font-weight="normal" text-anchor="middle" textLength="12.5" lengthAdjust="spacingAndGlyphs" stroke="#2a71a8" stroke-width=".400">3</text><text x="365.500" y="1195.290" font-size="21.800" fill="#333" stroke="#333" stroke-width=".3" textLength="65.5" lengthAdjust="spacingAndGlyphs">タスク</text><text x="565.5" y="1195.29" font-size="23" fill="#333" font-weight="normal" text-anchor="middle" textLength="53.5" lengthAdjust="spacingAndGlyphs" stroke="#333" stroke-width=".300">ToDo</text><text x="679.500" y="1195.290" font-size="21.700" fill="#333" stroke="#333" stroke-width=".3" textLength="43.5" lengthAdjust="spacingAndGlyphs">通常</text><text x="765" y="1195.290" font-size="21.700" fill="#2a71a8" stroke="#2a71a8" stroke-width=".3" textLength="152" lengthAdjust="spacingAndGlyphs">後片付けをする</text><text x="1167.500" y="1193.490" font-size="20.500" font-weight="bold" fill="#2a71a8" stroke="#2a71a8" stroke-width=".6" stroke-linejoin="round" textLength="39" lengthAdjust="spacingAndGlyphs">遠藤</text><text x="1212.500" y="1193.490" font-size="20.500" font-weight="bold" fill="#2a71a8" stroke="#2a71a8" stroke-width=".6" stroke-linejoin="round" textLength="40.5" lengthAdjust="spacingAndGlyphs">裕之</text><text x="240" y="1269" font-size="22" fill="#777" font-weight="normal" text-anchor="start" textLength="88" lengthAdjust="spacingAndGlyphs">(1-8/8)</text></g></g><g id="callouts"><defs><filter id="cshadow" x="-10%" y="-30%" width="120%" height="170%"><feGaussianBlur stdDeviation="5.400"/></filter></defs><g><rect x="216.3" y="832.5" width="1400.5" height="393.5" rx="24" ry="24" fill="none" stroke="#000" stroke-opacity=".36" stroke-width="14.4" filter="url(#cshadow)" transform="translate(6,8)"/><rect x="216.3" y="832.5" width="1400.5" height="393.5" rx="24" ry="24" fill="none" stroke="#fff" stroke-width="12.4"/><rect x="216.3" y="832.5" width="1400.5" height="393.5" rx="24" ry="24" fill="none" stroke="#000" stroke-width="6.4"/></g><g><rect x="215.4" y="764.8" width="101.6" height="56.2" rx="28" ry="28" fill="none" stroke="#000" stroke-opacity=".36" stroke-width="14" filter="url(#cshadow)" transform="translate(6,8)"/><rect x="215.4" y="764.8" width="101.6" height="56.2" rx="28" ry="28" fill="none" stroke="#fff" stroke-width="12"/><rect x="215.4" y="764.8" width="101.6" height="56.2" rx="28" ry="28" fill="none" stroke="#000" stroke-width="6"/></g><g><rect x="221.7" y="642.4" width="846.5" height="53.6" rx="26.8" ry="26.8" fill="none" stroke="#000" stroke-opacity=".36" stroke-width="13.8" filter="url(#cshadow)" transform="translate(6,8)"/><rect x="221.7" y="642.4" width="846.5" height="53.6" rx="26.8" ry="26.8" fill="none" stroke="#fff" stroke-width="11.8"/><rect x="221.7" y="642.4" width="846.5" height="53.6" rx="26.8" ry="26.8" fill="none" stroke="#000" stroke-width="5.8"/></g><g><rect x="1202.5" y="590.8" width="419.5" height="59" rx="29.5" ry="29.5" fill="none" stroke="#000" stroke-opacity=".36" stroke-width="13.6" filter="url(#cshadow)" transform="translate(6,8)"/><rect x="1202.5" y="590.8" width="419.5" height="59" rx="29.5" ry="29.5" fill="none" stroke="#fff" stroke-width="11.6"/><rect x="1202.5" y="590.8" width="419.5" height="59" rx="29.5" ry="29.5" fill="none" stroke="#000" stroke-width="5.6"/></g><rect x="222" y="641" width="846" height="57.5" fill="none" stroke="#ff5a5a" stroke-width="1.200"/><rect x="217" y="636" width="10" height="10" fill="#ff5f5f"/><rect x="1063" y="636" width="10" height="10" fill="#ff5f5f"/><rect x="217" y="693.5" width="10" height="10" fill="#ff5f5f"/><rect x="1063" y="693.5" width="10" height="10" fill="#ff5f5f"/><text x="1191.500" y="482" font-size="52.500" fill="#fff" stroke="#fff" stroke-width="7.35" stroke-linejoin="round">①</text><text x="1191.500" y="482" font-size="52.500" fill="#000" stroke="#000" stroke-width=".6" stroke-linejoin="round">①</text><text x="1225.100" y="482" font-size="47.500" font-weight="500" fill="#fff" stroke="#fff" stroke-width="7.4" stroke-linejoin="round">「フィルタ追加」<tspan dx="-21.9">で</tspan></text><text x="1225.100" y="482" font-size="47.500" font-weight="500" fill="#000" stroke="#000" stroke-width=".9" stroke-linejoin="round">「フィルタ追加」<tspan dx="-21.9">で</tspan></text><text x="1223.300" y="551" font-size="49.400" font-weight="500" fill="#fff" stroke="#fff" stroke-width="7.4" stroke-linejoin="round">「担当者」<tspan dx="-22.7">を選択</tspan></text><text x="1223.300" y="551" font-size="49.400" font-weight="500" fill="#000" stroke="#000" stroke-width=".9" stroke-linejoin="round">「担当者」<tspan dx="-22.7">を選択</tspan></text><text x="577.500" y="561" font-size="52.500" fill="#fff" stroke="#fff" stroke-width="7.35" stroke-linejoin="round">②</text><text x="577.500" y="561" font-size="52.500" fill="#000" stroke="#000" stroke-width=".6" stroke-linejoin="round">②</text><text x="628.500" y="561" font-size="47.800" font-weight="500" fill="#fff" stroke="#fff" stroke-width="7.4" stroke-linejoin="round">担当者として</text><text x="628.500" y="561" font-size="47.800" font-weight="500" fill="#000" stroke="#000" stroke-width=".9" stroke-linejoin="round">担当者として</text><text x="609.400" y="629" font-size="49.100" font-weight="500" fill="#fff" stroke="#fff" stroke-width="7.4" stroke-linejoin="round">「&lt;&lt; 自分 &gt;&gt;」<tspan dx="-22.6">を設定</tspan></text><text x="609.400" y="629" font-size="49.100" font-weight="500" fill="#000" stroke="#000" stroke-width=".9" stroke-linejoin="round">「&lt;&lt; 自分 &gt;&gt;」<tspan dx="-22.6">を設定</tspan></text><text x="326.500" y="765" font-size="52.500" fill="#fff" stroke="#fff" stroke-width="7.35" stroke-linejoin="round">③</text><text x="326.500" y="765" font-size="52.500" fill="#000" stroke="#000" stroke-width=".6" stroke-linejoin="round">③</text><text x="357.300" y="765" font-size="47.200" font-weight="500" fill="#fff" stroke="#fff" stroke-width="7.4" stroke-linejoin="round">「適用」<tspan dx="-21.7">をクリック</tspan></text><text x="357.300" y="765" font-size="47.200" font-weight="500" fill="#000" stroke="#000" stroke-width=".9" stroke-linejoin="round">「適用」<tspan dx="-21.7">をクリック</tspan></text><text x="1076.500" y="809" font-size="48.100" font-weight="500" fill="#fff" stroke="#fff" stroke-width="7.4" stroke-linejoin="round">自分の未完了のチケット</text><text x="1076.500" y="809" font-size="48.100" font-weight="500" fill="#000" stroke="#000" stroke-width=".9" stroke-linejoin="round">自分の未完了のチケット</text></g><rect x="207" y="272" width="1431" height="1000" fill="none" stroke="#3f97ff" stroke-width="2.200"/><rect x="1639" y="258.5" width="41" height="1002" fill="#727272"/></svg></div>
<div id="toolbar" style="left:0px;top:181px;width:145px;height:1079px;background:#5c5c5c;"><svg width="145" height="1079" viewBox="0 181 145 1079"><rect x="0" y="181" width="143" height="24" fill="#3b3b3b"/><rect x="0" y="181" width="143" height="1" fill="#2e2e2e"/><path d="M17 187l-6.5 6 6.5 6zM24.5 187l-6.5 6 6.5 6z" fill="#dcdcdc"/><rect x="2" y="205" width="141" height="1.5" fill="#6d6d6d"/><rect x="52" y="212" width="1.6" height="8" fill="#1a1a1a"/><rect x="55.6" y="212" width="1.6" height="8" fill="#1a1a1a"/><rect x="59.2" y="212" width="1.6" height="8" fill="#1a1a1a"/><rect x="62.8" y="212" width="1.6" height="8" fill="#1a1a1a"/><rect x="66.4" y="212" width="1.6" height="8" fill="#1a1a1a"/><rect x="70" y="212" width="1.6" height="8" fill="#1a1a1a"/><rect x="73.6" y="212" width="1.6" height="8" fill="#1a1a1a"/><rect x="77.2" y="212" width="1.6" height="8" fill="#1a1a1a"/><rect x="80.8" y="212" width="1.6" height="8" fill="#1a1a1a"/><rect x="84.4" y="212" width="1.6" height="8" fill="#1a1a1a"/><rect x="88" y="212" width="1.6" height="8" fill="#1a1a1a"/><rect x="14" y="240" width="56" height="44" fill="#3c3c3c" stroke="#484848" stroke-width="2"/><path d="M34 246v29.5l7-6.500 5 10 6-2.800-5-9.800 8.500-.8z" fill="#2d2d2d" stroke="#f2f2f2" stroke-width="2.400" stroke-linejoin="miter"/><path d="M94 245v30l7-7 5.500 11 5-2.400-5.500-10.800 8.500-1z" fill="#d2d2d2"/><path d="M128.5 282v-7.5l-7.5 7.5z" fill="#d8d8d8"/><path d="M37 292l2.500 8 7-4-3.500 7 8 2.500-8 2 2.500 7.500-6.500-4.500-4 7-1-8-8.500 0 6.500-5-5.500-6 8 1.500z" fill="#d2d2d2"/><path d="M43.500 310l13.500 14" stroke="#d2d2d2" stroke-width="3.600" stroke-linecap="round"/><ellipse cx="102" cy="305" rx="15.500" ry="9.500" fill="none" stroke="#d2d2d2" stroke-width="2.400"/><path d="M89 310c-3 4 2 7 4 4s-5-3-3 3c1 3 3 5 3 7" fill="none" stroke="#d2d2d2" stroke-width="2"/><path d="M102 298v29l6.500-8 12.500-2z" fill="#d2d2d2" stroke="#535353" stroke-width="1"/><rect x="12" y="334.8" width="120" height="1.200" fill="#474747"/><rect x="12" y="336" width="120" height="1.200" fill="#666"/><g transform="translate(26,379) scale(1)"><path d="M0 0l7-21 13.500-8.500 9.500 10-9 13z" fill="#d2d2d2"/><path d="M0 0l13.500-13" stroke="#535353" stroke-width="2"/><circle cx="14.500" cy="-14" r="2.600" fill="#535353"/><path d="M22.500-31.500l5-4 9 10-4.500 4z" fill="#d2d2d2"/></g><path d="M68 382v-7.5l-7.5 7.5z" fill="#d8d8d8"/><g transform="translate(89,379) scale(1)"><path d="M0 0l7-21 13.500-8.500 9.500 10-9 13z" fill="#d2d2d2"/><path d="M0 0l13.500-13" stroke="#535353" stroke-width="2"/><circle cx="14.500" cy="-14" r="2.600" fill="#535353"/><path d="M22.500-31.500l5-4 9 10-4.500 4z" fill="#d2d2d2"/></g><path d="M85 349c6 8-2 14-1 22s6 8 9 2" fill="none" stroke="#d2d2d2" stroke-width="2.200"/><path d="M30 396h24v6h-2c-.5-2.500-1.500-3.500-4-3.500h-4v19.500c0 2 1 2.500 4 2.500v2h-12v-2c3 0 4-.5 4-2.500v-19.500h-4c-2.500 0-3.500 1-4 3.500h-2z" fill="#d2d2d2"/><path d="M68 429v-7.5l-7.5 7.5z" fill="#d8d8d8"/><path d="M88 422L114.500 396" stroke="#d2d2d2" stroke-width="2.600"/><path d="M128.5 429v-7.5l-7.5 7.5z" fill="#d8d8d8"/><defs><linearGradient id="tg1" x1="0" y1="0" x2="0" y2="1"><stop offset="0" stop-color="#8c8c8c"/><stop offset="1" stop-color="#6a6a6a"/></linearGradient><linearGradient id="tg2" x1="0" y1="0" x2="1" y2="0"><stop offset="0" stop-color="#606060"/><stop offset="1" stop-color="#e6e6e6"/></linearGradient><linearGradient id="tg3" x1="0" y1="0" x2="1" y2="0"><stop offset="0" stop-color="#fff"/><stop offset="1" stop-color="#111"/></linearGradient></defs><rect x="29" y="446" width="27" height="24" fill="url(#tg1)" stroke="#d2d2d2" stroke-width="2"/><rect x="28" y="444.5" width="29" height="1.5" fill="#2e2e2e"/><path d="M68 478v-7.5l-7.5 7.5z" fill="#d8d8d8"/><path d="M116 441.500l3.500 2.500-15.500 18-4-3z" fill="#d2d2d2"/><path d="M99 460.500l4.500 3.500c-1 6-9 9.500-19 6 5-1 5-4 7-7s5-3.500 7.500-2.500z" fill="#d2d2d2"/><path d="M128.5 478v-7.5l-7.5 7.5z" fill="#d8d8d8"/><path d="M47 490.500c3-3 7 0 9 3l-19 20.500-7-6.500z" fill="#a4a4a4"/><path d="M47 490.500c3-3 7 0 9 3l-3.500 3.500-8-7.500z" fill="#d2d2d2"/><path d="M30 507.500l7 6.500-11 6z" fill="#d2d2d2"/><path d="M68 526v-7.5l-7.5 7.5z" fill="#d8d8d8"/><path d="M98 493l20-2.500-12.500 17-18 1.500z" fill="#d2d2d2"/><path d="M87.500 509l18-1.500 12.500-17v8l-11 15.500-18 2c-2-2-2-5-1.500-7z" fill="#a4a4a4"/><path d="M128.5 526v-7.5l-7.5 7.5z" fill="#d8d8d8"/><rect x="12" y="530.8" width="120" height="1.200" fill="#474747"/><rect x="12" y="532" width="120" height="1.200" fill="#666"/><path d="M55 557a13 13 0 1 1-25.500-4" fill="none" stroke="#9a9a9a" stroke-width="2.600" stroke-dasharray="4.200 3.400"/><path d="M38 545a13 13 0 0 1 17 12" fill="none" stroke="#d2d2d2" stroke-width="2.800"/><path d="M28.500 549l11.500-8v13.500z" fill="#d2d2d2"/><path d="M68 577v-7.5l-7.5 7.5z" fill="#d8d8d8"/><rect x="92.5" y="545.5" width="24" height="20" fill="#6e6e6e" stroke="#d2d2d2" stroke-width="2.200"/><rect x="85" y="558" width="16" height="13" fill="none" stroke="#b8b8b8" stroke-width="2.200"/><path d="M104 559l8.500-8.500M106 550h7v7" fill="none" stroke="#f0f0f0" stroke-width="2.200"/><rect x="91" y="543" width="27" height="1.5" fill="#2e2e2e"/><path d="M128.5 577v-7.5l-7.5 7.5z" fill="#d8d8d8"/><path d="M28 598c3-8 11-5 8 3-2 6 2 9 7 6 6-4 14-9 17-2 1 3 0 6-1 8-2-5-6-3-10 2-5 6-15 6-17-1-1-5 1-9-4-16z" fill="#b4b4b4"/><path d="M27 618l20-21" stroke="#f4f4f4" stroke-width="2"/><circle cx="27" cy="618" r="3.200" fill="#535353" stroke="#f4f4f4" stroke-width="2"/><circle cx="47" cy="597" r="3.200" fill="#535353" stroke="#f4f4f4" stroke-width="2"/><circle cx="36" cy="608" r="4" fill="#535353" stroke="#f4f4f4" stroke-width="2.600"/><path d="M68 626v-7.5l-7.5 7.5z" fill="#d8d8d8"/><rect x="95.5" y="594.5" width="21" height="21" fill="#6a6a6a" stroke="#d2d2d2" stroke-width="2.600" stroke-dasharray="3.500 2.500"/><path d="M86 591v24.500l6.500-6 9-5z" fill="#d2d2d2"/><circle cx="45" cy="649" r="11.500" fill="#6e6e6e" stroke="#b8b8b8" stroke-width="2"/><circle cx="34" cy="651" r="9.500" fill="#8a8a8a" stroke="#c4c4c4" stroke-width="2"/><path d="M28 651h20" stroke="#f4f4f4" stroke-width="2" stroke-dasharray="2.200 1.600"/><path d="M48 646.500v23.500l5-5.500 9-2.500z" fill="#d2d2d2" stroke="#535353" stroke-width="1"/><path d="M68 674v-7.5l-7.5 7.5z" fill="#d8d8d8"/><path d="M86 638l22 9v21l10 8h-32z" fill="#c8c8c8"/><path d="M86 650.500h22M86 662h22M96 642v28M108 668l-22 0M118 670.500h-32M112 666.500h-4" stroke="#4c4c4c" stroke-width="1.800" fill="none"/><path d="M86 673h30" stroke="#2a2a2a" stroke-width="1.600"/><path d="M128.5 674v-7.5l-7.5 7.5z" fill="#d8d8d8"/><rect x="12" y="678.8" width="120" height="1.200" fill="#474747"/><rect x="12" y="680" width="120" height="1.200" fill="#666"/><rect x="27" y="694" width="30" height="23.5" fill="#5e5e5e" stroke="#d2d2d2" stroke-width="2.200"/><path d="M27 705c8-6 16 3 30-4M27 712c9-8 17 2 30-3M38 694c6 6 5 16-2 24M48 694c5 8 3 17-1 24M27 700c5-2 9-3 13-6" fill="none" stroke="#f0f0f0" stroke-width="2"/><rect x="26" y="691.5" width="32" height="1.5" fill="#2e2e2e"/><rect x="87" y="694" width="30" height="23.5" fill="url(#tg2)" stroke="#d2d2d2" stroke-width="2.200"/><rect x="86" y="691.5" width="32" height="1.5" fill="#2e2e2e"/><path d="M52 738c3-3 7 1 4 4l-4.500 4.500 2 2-3 3-2-2-15 15c-2 2-5 1-4.500-1.500l.5-2.500 15.500-15.500-2-2 3-3 2 2z" fill="#d2d2d2"/><path d="M45 750l-12.500 12.500" stroke="#5a5a5a" stroke-width="2.400"/><path d="M68 773v-7.5l-7.5 7.5z" fill="#d8d8d8"/><rect x="85" y="739" width="17" height="16" fill="#c6c6c6"/><rect x="84" y="737" width="19" height="1.5" fill="#2e2e2e"/><rect x="94.5" y="744.5" width="17" height="16" fill="#8c8c8c" rx="4" stroke="#d6d6d6" stroke-width="2.200"/><circle cx="110.500" cy="758.500" r="7.500" fill="#5e5e5e" stroke="#e0e0e0" stroke-width="2.400"/><rect x="12" y="778.8" width="120" height="1.200" fill="#474747"/><rect x="12" y="780" width="120" height="1.200" fill="#666"/><rect x="39" y="797" width="18" height="24" fill="#7a7a7a" stroke="#d2d2d2" stroke-width="2.200"/><rect x="43.5" y="789" width="9" height="5" fill="#d2d2d2"/><rect x="41" y="793.5" width="14" height="4" fill="#b4b4b4"/><circle cx="48" cy="809" r="5.500" fill="#e6e6e6"/><circle cx="48" cy="809" r="2.200" fill="#3e3e3e"/><rect x="24" y="787" width="2.4" height="2.4" fill="#e2e2e2"/><rect x="24" y="794.2" width="2.4" height="2.4" fill="#e2e2e2"/><rect x="27.6" y="790.6" width="2.4" height="2.4" fill="#e2e2e2"/><rect x="31.2" y="787" width="2.4" height="2.4" fill="#e2e2e2"/><rect x="31.2" y="794.2" width="2.4" height="2.4" fill="#e2e2e2"/><rect x="34.8" y="790.6" width="2.4" height="2.4" fill="#e2e2e2"/><rect x="38.4" y="787" width="2.4" height="2.4" fill="#e2e2e2"/><rect x="38.4" y="794.2" width="2.4" height="2.4" fill="#e2e2e2"/><path d="M68 826v-7.5l-7.5 7.5z" fill="#d8d8d8"/><path d="M87 791v32.500h32" fill="none" stroke="#d2d2d2" stroke-width="2.200"/><rect x="92" y="805" width="6.5" height="17" fill="#8a8a8a" stroke="#d2d2d2" stroke-width="1.800"/><rect x="102" y="796" width="6.5" height="26" fill="#8a8a8a" stroke="#a8a8a8" stroke-width="1.800"/><rect x="112" y="801" width="6.5" height="21" fill="#8a8a8a" stroke="#d2d2d2" stroke-width="1.800"/><path d="M128.5 826v-7.5l-7.5 7.5z" fill="#d8d8d8"/><rect x="12" y="830.8" width="120" height="1.200" fill="#474747"/><rect x="12" y="832" width="120" height="1.200" fill="#666"/><rect x="31" y="848.5" width="22" height="18" fill="#7e7e7e" stroke="#d2d2d2" stroke-width="2.400"/><path d="M22 849h8M54 849h8M22 866h8M54 866h8M31 840v8M53 840v8M31 867v8M53 867v8" stroke="#bdbdbd" stroke-width="1.800"/><path d="M87 870l24-18-4 11z" fill="#d2d2d2"/><path d="M111 852l12-6-8 14-8 3z" fill="#a8a8a8"/><path d="M128.5 878v-7.5l-7.5 7.5z" fill="#d8d8d8"/><path d="M31 921c-2-6-5-9-6.500-13 2-2 5-1 7 3l1.500 3v-18c0-3 4-3 4.500 0v10l.5-14c0-3 4.500-3 4.500 0v13l1.500-12c.500-3 4.500-2.500 4.500.5l-1 13 3-8c1-3 5-2 4 1l-3 13c-.5 3-1.500 6-4 9z" fill="#d2d2d2"/><path d="M68 926v-7.5l-7.5 7.5z" fill="#d8d8d8"/><circle cx="99.500" cy="901.500" r="10" fill="#8e8e8e" stroke="#d2d2d2" stroke-width="3"/><path d="M106.500 909.500l10.500 10.500" stroke="#d2d2d2" stroke-width="4.600" stroke-linecap="round"/><path d="M93 900c1-4 6-6 10-4" stroke="#b8b8b8" stroke-width="2" fill="none"/><rect x="12" y="930.3" width="120" height="1.200" fill="#474747"/><rect x="12" y="931.5" width="120" height="1.200" fill="#666"/><rect x="49" y="975" width="70" height="70" fill="#fff" stroke="#3a3a3a" stroke-width="1.500"/><rect x="68.5" y="994.5" width="31" height="30.5" fill="#535353" stroke="#2e2e2e" stroke-width="1.500"/><rect x="12.5" y="939.5" width="70.5" height="70" fill="#fff" stroke="#2c2c2c" stroke-width="2"/><path d="M14.500 1008L81.500 941.500" stroke="#f02222" stroke-width="5"/><path d="M106 946h6c4 0 5 2 5 6v5" fill="none" stroke="#d6d6d6" stroke-width="2.600"/><path d="M100 946l7-6.500v13zM117 963l-6.500-7h13z" fill="#d6d6d6"/><rect x="21" y="1030" width="13.5" height="13" fill="#2c2c2c" stroke="#6e6e6e" stroke-width="1.600"/><rect x="14" y="1023" width="13.5" height="13" fill="#f2f2f2" stroke="#3a3a3a" stroke-width="1.600"/><rect x="12.6" y="1021.6" width="16.3" height="15.8" fill="none" stroke="#8a8a8a" stroke-width="1.200"/><rect x="15" y="1061" width="117" height="36.5" fill="#666" stroke="#474747" stroke-width="2"/><rect x="93" y="1062" width="38" height="34.5" fill="#464646"/><rect x="22" y="1066.5" width="26.5" height="25" fill="#000"/><rect x="60.5" y="1066.5" width="25" height="25" fill="url(#tg3)" stroke="#111" stroke-width="2"/><rect x="99" y="1067" width="24" height="24" fill="#fff" stroke="#111" stroke-width="2"/><path d="M100.500 1089.500L121.500 1068.500" stroke="#f02222" stroke-width="3.600"/><rect x="15" y="1111" width="117" height="32" fill="#676767" stroke="#474747" stroke-width="2"/><rect x="17" y="1112.5" width="37" height="29" fill="#424242"/><circle cx="33" cy="1125" r="7.200" fill="#8a8a8a" stroke="#d0d0d0" stroke-width="2.200"/><rect x="34" y="1127" width="11" height="10.500" fill="#dcdcdc"/><circle cx="71" cy="1125" r="7.200" fill="#8a8a8a" stroke="#d0d0d0" stroke-width="2.200"/><rect x="72" y="1131" width="11" height="7" fill="#cfcfcf"/><circle cx="109" cy="1125" r="7.200" fill="#8a8a8a" stroke="#d0d0d0" stroke-width="2.200"/><rect x="109.5" y="1126" width="6.500" height="6.500" fill="#e2e2e2"/><rect x="49" y="1170" width="28" height="23" fill="#747474" stroke="#c4c4c4" stroke-width="2"/><rect x="61" y="1162.5" width="28" height="22.5" fill="#7c7c7c" stroke="#dadada" stroke-width="2"/><rect x="61" y="1162.5" width="28" height="4" fill="#d4d4d4"/><rect x="0" y="1209" width="143" height="51" fill="#555"/><rect x="0" y="1210" width="17" height="50" fill="#9aa89a"/><path d="M17 1210v50" stroke="#fff" stroke-width="2.400"/><path d="M17 1210v50" stroke="#111" stroke-width="2.400" stroke-dasharray="6 6"/><rect x="30" y="1200" width="113" height="34" fill="#676767" stroke="#474747" stroke-width="2"/><rect x="32" y="1201" width="38" height="32" fill="#424242"/><g transform="translate(16,87)"><circle cx="33" cy="1125" r="7.200" fill="#8a8a8a" stroke="#d0d0d0" stroke-width="2.200"/><rect x="34" y="1127" width="11" height="10.500" fill="#dcdcdc"/><circle cx="71" cy="1125" r="7.200" fill="#8a8a8a" stroke="#d0d0d0" stroke-width="2.200"/><rect x="72" y="1131" width="11" height="7" fill="#cfcfcf"/><circle cx="109" cy="1125" r="7.200" fill="#8a8a8a" stroke="#d0d0d0" stroke-width="2.200"/><rect x="109.5" y="1126" width="6.500" height="6.500" fill="#e2e2e2"/></g><rect x="64" y="1253" width="28" height="8" fill="#747474" stroke="#c4c4c4" stroke-width="2"/><rect x="76" y="1246" width="28" height="14" fill="#7c7c7c" stroke="#dadada" stroke-width="2"/><rect x="76" y="1246" width="28" height="4" fill="#d4d4d4"/><rect x="0" y="1196" width="143" height="13" fill="#5c5c5c"/><rect x="0" y="1208.5" width="143" height="2.5" fill="#2f2f2f"/><rect x="0" y="181" width="2.2" height="1029" fill="#2d2d2d"/><rect x="142" y="181" width="3" height="1079" fill="#2b2b2b"/></svg></div>
<div id="layers-panel" style="left:1316px;top:1086px;width:364px;height:174px;box-shadow:-2px -1px 8px rgba(0,0,0,.4);border-radius:7px 0 0 0;"><svg width="364" height="174" viewBox="1316 1086 364 174"><defs><linearGradient id="lpg" x1="0" y1="0" x2="0" y2="1"><stop offset="0" stop-color="#474747"/><stop offset="1" stop-color="#383838"/></linearGradient></defs><rect x="1317" y="1087" width="363" height="173" fill="#4b4b4b"/><rect x="1317" y="1087" width="363" height="27" fill="url(#lpg)"/><path d="M1328.500 1095.500l10.500 10.500M1339 1095.500l-10.500 10.500" stroke="#dedede" stroke-width="2"/><rect x="1317" y="1114" width="363" height="33.5" fill="#3d3d3d"/><rect x="1318.5" y="1114" width="113.5" height="34" fill="#535353"/><rect x="1433.5" y="1115.5" width="155" height="32" fill="#454545"/><rect x="1432" y="1114" width="1.5" height="33" fill="#2c2c2c"/><rect x="1588.5" y="1114" width="1.5" height="33" fill="#2c2c2c"/><rect x="1317" y="1113" width="363" height="1.5" fill="#2c2c2c"/><rect x="1432" y="1147" width="248" height="1.5" fill="#2c2c2c"/><text x="1335" y="1140.500" font-size="22.500" fill="#e4e4e4" stroke="#e4e4e4" stroke-width=".25" textLength="83" lengthAdjust="spacingAndGlyphs">レイヤー</text><text x="1448" y="1140.500" font-size="22" fill="#b4b4b4" stroke="#b4b4b4" stroke-width=".25" textLength="127" lengthAdjust="spacingAndGlyphs">アートボード</text><rect x="1330" y="1161" width="350" height="40" fill="#67788b"/><rect x="1330" y="1202.5" width="350" height="40" fill="#535353"/><rect x="1330" y="1201" width="350" height="1.5" fill="#3a3a3a"/><rect x="1330" y="1243" width="350" height="1.5" fill="#3a3a3a"/><rect x="1330" y="1160" width="350" height="1.2" fill="#3a3a3a"/><rect x="1370" y="1161" width="1.5" height="82" fill="#3a3a3a"/><rect x="1412.5" y="1161" width="1.5" height="82" fill="#3a3a3a"/><rect x="1415.5" y="1162" width="7" height="38.5" fill="#f0504f"/><rect x="1415.5" y="1203.5" width="7" height="38.5" fill="#4b82f0"/><path d="M1336 1181c6-11 19-11 25 0-6 9.500-19 9.500-25 0z" fill="#c2c2c2"/><circle cx="1348.500" cy="1180" r="5.600" fill="#4a4a4a"/><circle cx="1348.500" cy="1180" r="2.600" fill="#2c2c2c"/><circle cx="1350.500" cy="1178" r="1.300" fill="#d8d8d8"/><path d="M1436.500 1173.5v15l11.500-7.500z" fill="#e6e6e6"/><rect x="1468.5" y="1164" width="35.5" height="35" fill="#fff" stroke="#111" stroke-width="1.800"/><path d="M1336 1222.500c6-11 19-11 25 0-6 9.500-19 9.500-25 0z" fill="#c2c2c2"/><circle cx="1348.500" cy="1221.500" r="5.600" fill="#4a4a4a"/><circle cx="1348.500" cy="1221.500" r="2.600" fill="#2c2c2c"/><circle cx="1350.500" cy="1219.500" r="1.300" fill="#d8d8d8"/><path d="M1436.500 1215v15l11.500-7.500z" fill="#e6e6e6"/><rect x="1468.5" y="1205.5" width="35.5" height="35" fill="#fff" stroke="#111" stroke-width="1.800"/><rect x="1471" y="1173" width="30" height="1.4" fill="#bbb"/><rect x="1482" y="1168.5" width="19" height="2" fill="#444"/><rect x="1490" y="1172" width="11" height="1.6" fill="#666"/><rect x="1471" y="1180" width="30" height="0.8" fill="#999"/><rect x="1470" y="1207" width="33" height="7" fill="#6e99bd"/><rect x="1472" y="1218" width="28" height="1" fill="#bbb"/><rect x="1472" y="1222" width="28" height="1" fill="#cfd8e2"/><rect x="1472" y="1226" width="28" height="1" fill="#cfd8e2"/><rect x="1472" y="1230" width="28" height="1" fill="#cfd8e2"/><rect x="1472" y="1234" width="28" height="1" fill="#cfd8e2"/><text x="1517.500" y="1192" font-size="24.500" fill="#ececec" textLength="90" lengthAdjust="spacingAndGlyphs">レイヤー</text><text x="1615.500" y="1192" font-size="25" fill="#ececec" stroke="#ececec" stroke-width=".4" textLength="16.7" lengthAdjust="spacingAndGlyphs">2</text><text x="1517.500" y="1233.500" font-size="24.500" fill="#ececec" textLength="90" lengthAdjust="spacingAndGlyphs">レイヤー</text><text x="1617" y="1233.500" font-size="25" fill="#ececec" stroke="#ececec" stroke-width=".4" textLength="16.7" lengthAdjust="spacingAndGlyphs">1</text><rect x="1316" y="1087" width="1.5" height="173" fill="#2a2a2a"/><rect x="1316" y="1086" width="364" height="1.5" fill="#2a2a2a"/></svg></div>

</body></html>
